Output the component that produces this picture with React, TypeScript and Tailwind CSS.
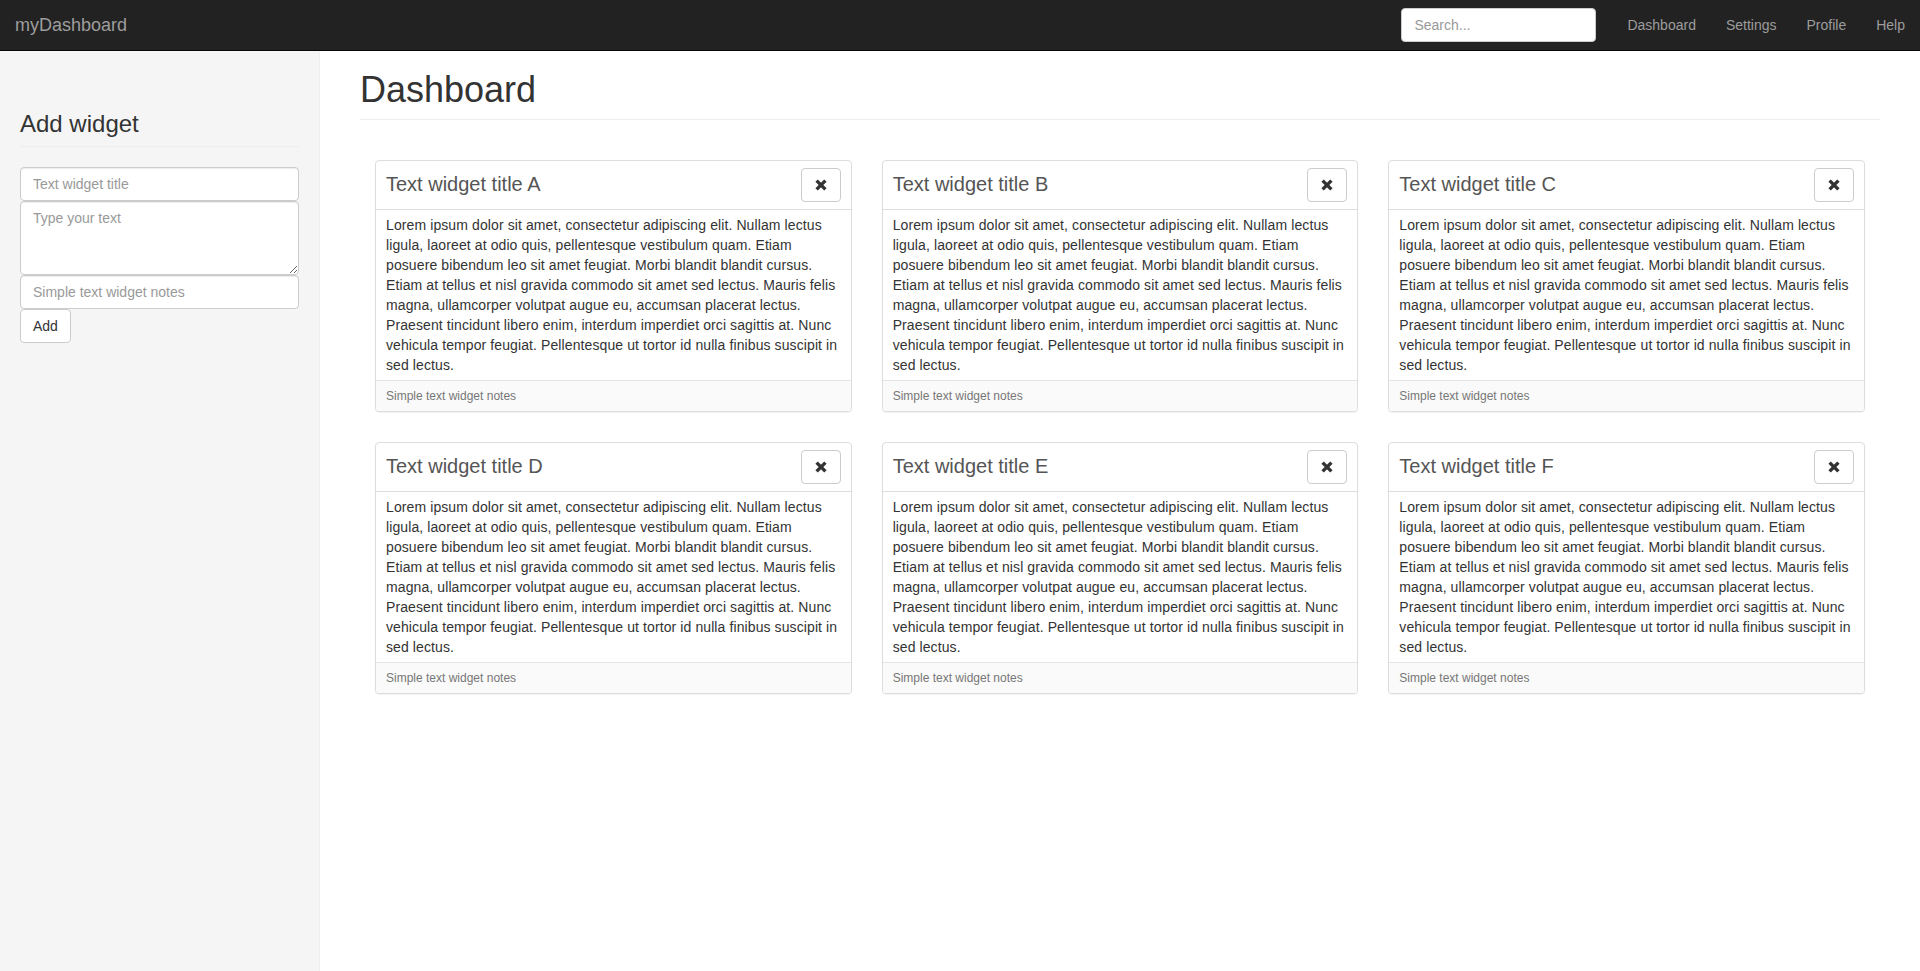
const lorem =
  'Lorem ipsum dolor sit amet, consectetur adipiscing elit. Nullam lectus ligula, laoreet at odio quis, pellentesque vestibulum quam. Etiam posuere bibendum leo sit amet feugiat. Morbi blandit blandit cursus. Etiam at tellus et nisl gravida commodo sit amet sed lectus. Mauris felis magna, ullamcorper volutpat augue eu, accumsan placerat lectus. Praesent tincidunt libero enim, interdum imperdiet orci sagittis at. Nunc vehicula tempor feugiat. Pellentesque ut tortor id nulla finibus suscipit in sed lectus.'

const widgets = ['A', 'B', 'C', 'D', 'E', 'F'].map((l) => ({
  title: `Text widget title ${l}`,
  text: lorem,
  notes: 'Simple text widget notes',
}))

const navLinks = ['Dashboard', 'Settings', 'Profile', 'Help']

function RemoveIcon() {
  return (
    <svg width="12" height="12" viewBox="0 0 12 12" fill="none">
      <path d="M1.6 1.6L10.4 10.4M10.4 1.6L1.6 10.4" stroke="#333" strokeWidth="3.4" />
    </svg>
  )
}

function Widget({ title, text, notes }: { title: string; text: string; notes: string }) {
  return (
    <div className="border border-[#ddd] rounded-[4px] bg-white shadow-[0_1px_1px_rgba(0,0,0,0.05)] overflow-hidden">
      <div className="flex items-center justify-between pl-[10px] pr-[10px] pt-[7px] pb-[7px] border-b border-[#ddd]">
        <span className="mb-[2px] text-[20px] leading-[22px] text-[#555]">{title}</span>
        <button className="w-[40px] h-[34px] flex items-center justify-center border border-[#ccc] rounded-[4px] bg-white">
          <RemoveIcon />
        </button>
      </div>
      <div className="px-[10px] py-[5px] text-[14px] leading-[20px] tracking-[0.1px] text-[#333]">{text}</div>
      <div className="px-[10px] pt-[7px] pb-[6px] text-[12px] leading-[17px] text-[#777] bg-[#fafafa] border-t border-[#e5e5e5]">
        {notes}
      </div>
    </div>
  )
}

export default function App() {
  const inputCls =
    'block w-full h-[34px] px-[12px] py-[6px] text-[14px] leading-[20px] text-[#555] bg-white border border-[#ccc] rounded-[4px] shadow-[inset_0_1px_1px_rgba(0,0,0,0.075)] placeholder:text-[#999] outline-none'

  return (
    <div className="min-h-[971px] flex flex-col bg-white font-['Liberation_Sans',Arial,sans-serif] text-[#333]">
      <header className="h-[51px] bg-[#222] border-b border-[#080808] flex items-center">
        <span className="pl-[15px] text-[18px] leading-[20px] text-[#9d9d9d]">myDashboard</span>
        <div className="ml-auto flex items-center">
          <input className="w-[195px] h-[34px] px-[12px] text-[14px] bg-white border border-[#ccc] rounded-[4px] placeholder:text-[#999] outline-none mr-[16px]" placeholder="Search..." />
          <nav className="flex">
            {navLinks.map((l) => (
              <a key={l} href="#" className="px-[15px] py-[15px] text-[14px] leading-[20px] text-[#9d9d9d]">
                {l}
              </a>
            ))}
          </nav>
        </div>
      </header>

      <div className="flex flex-1">
        <aside className="w-[320px] shrink-0 bg-[#f5f5f5] border-r border-[#eee] p-[20px]">
          <h3 className="mt-[40px] mb-[20px] pb-[9px] border-b border-[#eee] text-[24px] leading-[26.4px] text-[#333]">
            Add widget
          </h3>
          <input className={inputCls} placeholder="Text widget title" />
          <textarea rows={3} className={`${inputCls} h-[74px] resize-y`} placeholder="Type your text" />
          <input className={inputCls} placeholder="Simple text widget notes" />
          <button className="h-[34px] px-[12px] text-[14px] leading-[20px] text-[#333] bg-white border border-[#ccc] rounded-[4px]">
            Add
          </button>
        </aside>

        <main className="flex-1 px-[40px] pt-[19px]">
          <h1 className="pb-[9px] border-b border-[#eee] text-[36px] leading-[39.6px] text-[#333]">Dashboard</h1>
          <div className="mt-[40px] px-[15px] grid grid-cols-3 gap-x-[30px] gap-y-[30px]">
            {widgets.map((w) => (
              <Widget key={w.title} {...w} />
            ))}
          </div>
        </main>
      </div>
    </div>
  )
}
